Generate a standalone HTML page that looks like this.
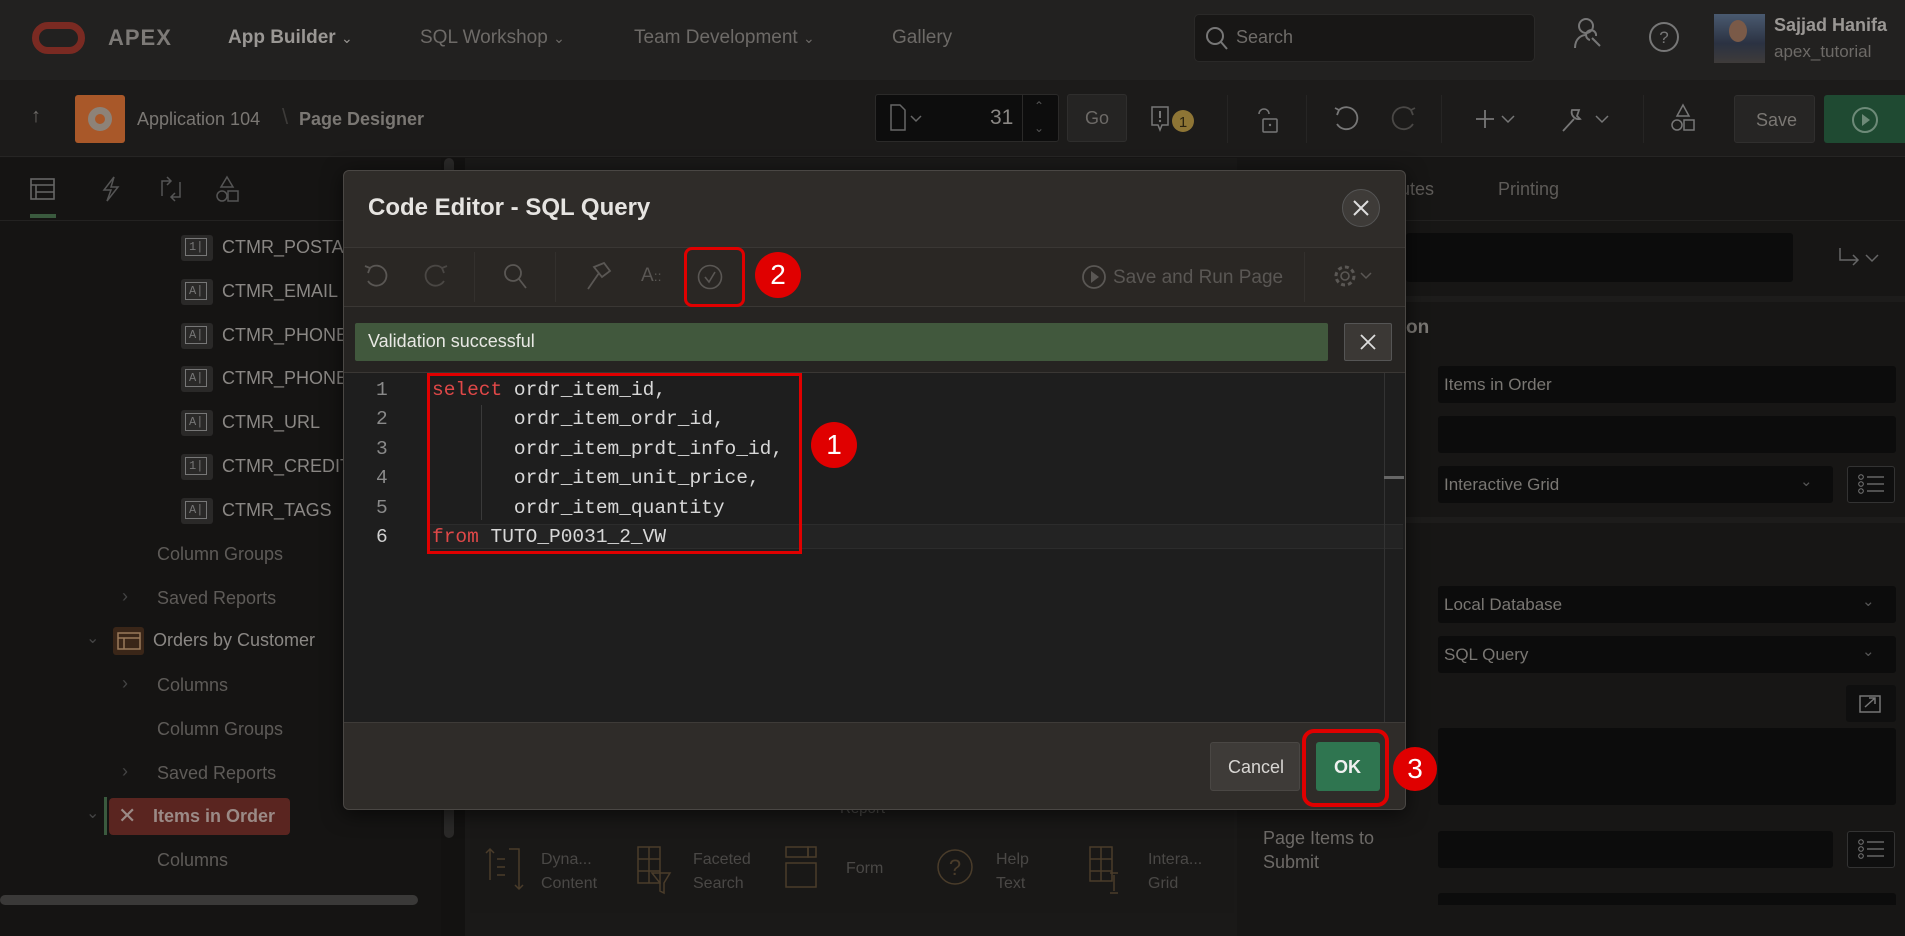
<!DOCTYPE html>
<html><head><meta charset="utf-8"><style>
*{box-sizing:border-box;margin:0;padding:0}
body{width:1905px;height:936px;overflow:hidden;background:#161514;font-family:"Liberation Sans",sans-serif;position:relative;color:#8a8784}
.a{position:absolute}
.t{position:absolute;white-space:nowrap}
svg{position:absolute;overflow:visible}
.inp{position:absolute;background:#0c0c0c;border-radius:3px}
.mono{font-family:"Liberation Mono",monospace}
</style></head><body>
<!-- top header -->
<div class="a" style="left:0;top:0;width:1905px;height:80px;background:#222120"></div>
<div class="a" style="left:32px;top:22px;width:53px;height:32px;border:7px solid #7a2a22;border-radius:16px"></div>
<div class="t" style="left:108px;top:25px;font-size:22px;font-weight:bold;color:#7d7a77;letter-spacing:1px">APEX</div>
<div class="t" style="left:228px;top:27px;font-size:19px;font-weight:bold;color:#9a9794">App Builder <span style="font-weight:normal;font-size:14px">&#8964;</span></div>
<div class="t" style="left:420px;top:27px;font-size:19px;color:#6d6a67">SQL Workshop <span style="font-size:14px">&#8964;</span></div>
<div class="t" style="left:634px;top:27px;font-size:19px;color:#6d6a67">Team Development <span style="font-size:14px">&#8964;</span></div>
<div class="t" style="left:892px;top:27px;font-size:19px;color:#6d6a67">Gallery</div>
<div class="a" style="left:1194px;top:14px;width:341px;height:48px;background:#181716;border:1px solid #2a2928;border-radius:5px"></div>
<svg style="left:1205px;top:26px" width="26" height="26"><circle cx="10" cy="10" r="8" fill="none" stroke="#777" stroke-width="2"/><line x1="16" y1="16" x2="22" y2="23" stroke="#777" stroke-width="2"/></svg>
<div class="t" style="left:1236px;top:27px;font-size:18px;color:#6f6c69">Search</div>
<svg style="left:1572px;top:16px" width="32" height="40"><circle cx="14" cy="10" r="7" fill="none" stroke="#777" stroke-width="2"/><path d="M3 32 C3 22 10 19 14 19" fill="none" stroke="#777" stroke-width="2"/><path d="M20 22 L28 30 M18 24 a5 5 0 1 1 6 -4" fill="none" stroke="#777" stroke-width="2"/></svg>
<svg style="left:1648px;top:21px" width="32" height="32"><circle cx="16" cy="16" r="14" fill="none" stroke="#777" stroke-width="2"/><text x="16" y="22" font-size="17" fill="#777" text-anchor="middle" font-family="Liberation Sans">?</text></svg>
<div class="a" style="left:1714px;top:14px;width:51px;height:49px;background:linear-gradient(#4a5a70,#2b3242 60%,#3e3b3a);"></div>
<div class="a" style="left:1729px;top:20px;width:18px;height:22px;border-radius:50%;background:#7a5a48"></div>
<div class="t" style="left:1774px;top:15px;font-size:18px;font-weight:bold;color:#9a9794">Sajjad Hanifa</div>
<div class="t" style="left:1774px;top:42px;font-size:17px;color:#6d6a67">apex_tutorial</div>
<!-- second bar -->
<div class="a" style="left:0;top:80px;width:1905px;height:77px;background:#1c1b1a;border-bottom:1px solid #262524"></div>
<div class="t" style="left:31px;top:105px;font-size:20px;color:#6d6a67">&#8593;</div>
<div class="a" style="left:75px;top:95px;width:50px;height:48px;background:#a95829;border-radius:3px"></div>
<div class="a" style="left:88px;top:107px;width:24px;height:24px;border-radius:50%;border:7px solid #8d8278"></div>
<div class="t" style="left:137px;top:109px;font-size:18px;color:#7a7773">Application 104</div>
<div class="t" style="left:282px;top:104px;font-size:22px;color:#3d3b39">\</div>
<div class="t" style="left:299px;top:109px;font-size:18px;font-weight:bold;color:#7a7773">Page Designer</div>
<div class="a" style="left:875px;top:94px;width:184px;height:48px;background:#0d0d0d;border:1px solid #2b2a29;border-radius:3px"></div>
<div class="a" style="left:1022px;top:95px;width:1px;height:46px;background:#2b2a29"></div>
<svg style="left:889px;top:104px" width="40" height="28"><path d="M2 1 H11 L16 6 V26 H2 Z" fill="none" stroke="#666" stroke-width="1.5"/><path d="M22 12 l5 5 l5 -5" fill="none" stroke="#666" stroke-width="1.5"/></svg>
<div class="t" style="left:990px;top:106px;font-size:21px;color:#8a8784">31</div>
<div class="t" style="left:1034px;top:99px;font-size:12px;color:#555">&#8963;</div>
<div class="t" style="left:1034px;top:121px;font-size:12px;color:#555">&#8964;</div>
<div class="a" style="left:1067px;top:94px;width:60px;height:48px;background:#252423;border:1px solid #2f2e2d;border-radius:3px"></div>
<div class="t" style="left:1085px;top:108px;font-size:18px;color:#6d6a67">Go</div>
<svg style="left:1150px;top:106px" width="52" height="30"><path d="M2 1 H18 V19 H12 L10 24 L8 19 H2 Z" fill="none" stroke="#777" stroke-width="1.5"/><line x1="10" y1="5" x2="10" y2="12" stroke="#777" stroke-width="2"/><circle cx="10" cy="15" r="1.2" fill="#777"/><circle cx="33" cy="15" r="11" fill="#8e7535"/><text x="33" y="21" font-size="15" fill="#2a2210" text-anchor="middle" font-family="Liberation Sans">1</text></svg>
<div class="a" style="left:1227px;top:95px;width:1px;height:48px;background:#262524"></div>
<svg style="left:1255px;top:106px" width="26" height="30"><path d="M4 8 a5 5 0 0 1 10 0" fill="none" stroke="#777" stroke-width="1.5"/><rect x="8" y="13" width="14" height="13" rx="1" fill="none" stroke="#777" stroke-width="1.5"/><circle cx="15" cy="19" r="1.2" fill="#777"/></svg>
<div class="a" style="left:1306px;top:95px;width:1px;height:48px;background:#262524"></div>
<svg style="left:1333px;top:106px" width="90" height="28"><path d="M6 4 A11 11 0 1 1 4 18" fill="none" stroke="#777" stroke-width="1.8"/><path d="M2 2 L6 4 L4 9" fill="none" stroke="#777" stroke-width="1.8"/><path d="M78 4 A11 11 0 1 0 80 18" fill="none" stroke="#4a4846" stroke-width="1.8"/><path d="M82 2 L78 4 L80 9" fill="none" stroke="#4a4846" stroke-width="1.8"/></svg>
<div class="a" style="left:1441px;top:95px;width:1px;height:48px;background:#262524"></div>
<svg style="left:1476px;top:108px" width="46" height="24"><path d="M9 2 V20 M0 11 H18" stroke="#777" stroke-width="1.8"/><path d="M26 8 l6 6 l6 -6" fill="none" stroke="#777" stroke-width="1.5"/></svg>
<svg style="left:1560px;top:104px" width="52" height="30"><path d="M3 27 L14 15 M12 6 a7 7 0 0 0 8 9 L17 12 L19 6 Z" fill="none" stroke="#777" stroke-width="1.8"/><path d="M36 12 l6 6 l6 -6" fill="none" stroke="#777" stroke-width="1.5"/></svg>
<div class="a" style="left:1643px;top:95px;width:1px;height:48px;background:#262524"></div>
<svg style="left:1670px;top:104px" width="26" height="30"><path d="M13 1 L19 12 H7 Z" fill="none" stroke="#777" stroke-width="1.5"/><circle cx="7" cy="21" r="5" fill="none" stroke="#777" stroke-width="1.5"/><rect x="14" y="16" width="10" height="10" fill="none" stroke="#777" stroke-width="1.5"/></svg>
<div class="a" style="left:1734px;top:95px;width:81px;height:48px;background:#262524;border:1px solid #302f2e;border-radius:3px"></div>
<div class="t" style="left:1756px;top:110px;font-size:18px;color:#7a7773">Save</div>
<div class="a" style="left:1824px;top:95px;width:81px;height:48px;background:#1f4a32;border-radius:3px 0 0 3px"></div>
<svg style="left:1851px;top:106px" width="28" height="28"><circle cx="14" cy="14" r="12" fill="none" stroke="#6d8a78" stroke-width="2"/><path d="M11 8 L19 14 L11 20 Z" fill="#6d8a78"/></svg>
<!-- left panel -->
<div class="a" style="left:0;top:158px;width:441px;height:778px;background:#151413"></div>
<div class="a" style="left:0;top:220px;width:441px;height:1px;background:#232221"></div>
<svg style="left:30px;top:176px" width="220" height="26"><rect x="1" y="3" width="23" height="20" fill="none" stroke="#666" stroke-width="1.6"/><line x1="1" y1="9" x2="24" y2="9" stroke="#666" stroke-width="1.6"/><line x1="6" y1="9" x2="6" y2="23" stroke="#666" stroke-width="1.6"/><line x1="6" y1="16" x2="24" y2="16" stroke="#666" stroke-width="1.6"/><path d="M84 1 L74 14 H81 L77 25 L88 11 H81 Z" fill="none" stroke="#555" stroke-width="1.5"/><path d="M140 5 H132 V20 M142 21 H150 V6 M137 1 L141 5 L137 9 M145 25 L141 21 L145 17" fill="none" stroke="#555" stroke-width="1.5"/><path d="M197 1 L203 11 H191 Z" fill="none" stroke="#555" stroke-width="1.5"/><circle cx="192" cy="20" r="5" fill="none" stroke="#555" stroke-width="1.5"/><rect x="198" y="15" width="10" height="10" fill="none" stroke="#555" stroke-width="1.5"/></svg>
<div class="a" style="left:30px;top:214px;width:26px;height:4px;background:#3a5a3e"></div>
<!-- tree rows -->
<div class="a" style="left:181px;top:235px;width:32px;height:26px;background:#2a2928;border-radius:3px"></div>
<div class="t mono" style="left:185px;top:238px;font-size:12px;color:#777;border:1px solid #777;padding:0 3px;line-height:16px">1|</div>
<div class="t" style="left:222px;top:237px;font-size:18px;color:#8a8784">CTMR_POSTA</div>
<div class="a" style="left:181px;top:279px;width:32px;height:26px;background:#2a2928;border-radius:3px"></div>
<div class="t mono" style="left:185px;top:282px;font-size:12px;color:#777;border:1px solid #777;padding:0 3px;line-height:16px">A|</div>
<div class="t" style="left:222px;top:281px;font-size:18px;color:#8a8784">CTMR_EMAIL</div>
<div class="a" style="left:181px;top:323px;width:32px;height:26px;background:#2a2928;border-radius:3px"></div>
<div class="t mono" style="left:185px;top:326px;font-size:12px;color:#777;border:1px solid #777;padding:0 3px;line-height:16px">A|</div>
<div class="t" style="left:222px;top:325px;font-size:18px;color:#8a8784">CTMR_PHONE</div>
<div class="a" style="left:181px;top:366px;width:32px;height:26px;background:#2a2928;border-radius:3px"></div>
<div class="t mono" style="left:185px;top:369px;font-size:12px;color:#777;border:1px solid #777;padding:0 3px;line-height:16px">A|</div>
<div class="t" style="left:222px;top:368px;font-size:18px;color:#8a8784">CTMR_PHONE</div>
<div class="a" style="left:181px;top:410px;width:32px;height:26px;background:#2a2928;border-radius:3px"></div>
<div class="t mono" style="left:185px;top:413px;font-size:12px;color:#777;border:1px solid #777;padding:0 3px;line-height:16px">A|</div>
<div class="t" style="left:222px;top:412px;font-size:18px;color:#8a8784">CTMR_URL</div>
<div class="a" style="left:181px;top:454px;width:32px;height:26px;background:#2a2928;border-radius:3px"></div>
<div class="t mono" style="left:185px;top:457px;font-size:12px;color:#777;border:1px solid #777;padding:0 3px;line-height:16px">1|</div>
<div class="t" style="left:222px;top:456px;font-size:18px;color:#8a8784">CTMR_CREDIT</div>
<div class="a" style="left:181px;top:498px;width:32px;height:26px;background:#2a2928;border-radius:3px"></div>
<div class="t mono" style="left:185px;top:501px;font-size:12px;color:#777;border:1px solid #777;padding:0 3px;line-height:16px">A|</div>
<div class="t" style="left:222px;top:500px;font-size:18px;color:#8a8784">CTMR_TAGS</div>
<div class="t" style="left:157px;top:544px;font-size:18px;color:#5e5b58">Column Groups</div>
<div class="t" style="left:122px;top:586px;font-size:18px;color:#444">›</div>
<div class="t" style="left:157px;top:588px;font-size:18px;color:#5e5b58">Saved Reports</div>
<div class="t" style="left:86px;top:628px;font-size:16px;color:#444">&#8964;</div>
<div class="a" style="left:113px;top:627px;width:31px;height:28px;background:#3a2618;border-radius:3px"></div>
<svg style="left:117px;top:632px" width="24" height="18"><rect x="1" y="1" width="22" height="16" fill="none" stroke="#9a7a5a" stroke-width="1.5"/><line x1="1" y1="6" x2="23" y2="6" stroke="#9a7a5a" stroke-width="1.5"/><line x1="7" y1="6" x2="7" y2="17" stroke="#9a7a5a" stroke-width="1.5"/></svg>
<div class="t" style="left:153px;top:630px;font-size:18px;color:#8a8784">Orders by Customer</div>
<div class="t" style="left:122px;top:673px;font-size:18px;color:#444">›</div>
<div class="t" style="left:157px;top:675px;font-size:18px;color:#5e5b58">Columns</div>
<div class="t" style="left:157px;top:719px;font-size:18px;color:#5e5b58">Column Groups</div>
<div class="t" style="left:122px;top:761px;font-size:18px;color:#444">›</div>
<div class="t" style="left:157px;top:763px;font-size:18px;color:#5e5b58">Saved Reports</div>
<div class="t" style="left:86px;top:803px;font-size:16px;color:#444">&#8964;</div>
<div class="a" style="left:104px;top:797px;width:3px;height:38px;background:#3a5a3e"></div>
<div class="a" style="left:109px;top:798px;width:181px;height:37px;background:#5a2520;border-radius:4px"></div>
<div class="t" style="left:118px;top:803px;font-size:22px;color:#9b8a86">&#10005;</div>
<div class="t" style="left:153px;top:806px;font-size:18px;font-weight:bold;color:#9b8a86">Items in Order</div>
<div class="t" style="left:157px;top:850px;font-size:18px;color:#5e5b58">Columns</div>
<div class="a" style="left:0;top:895px;width:418px;height:10px;background:#3a3938;border-radius:5px"></div>
<div class="a" style="left:441px;top:158px;width:24px;height:778px;background:#131211"></div>
<div class="a" style="left:444px;top:158px;width:10px;height:680px;background:#2a2928;border-radius:5px"></div>
<!-- middle -->
<div class="a" style="left:465px;top:158px;width:772px;height:778px;background:#1a1918"></div>
<div class="a" style="left:470px;top:810px;width:764px;height:103px;background:#191817"></div>
<div class="t" style="left:840px;top:800px;font-size:15px;color:#4a4846">Report</div>
<svg style="left:485px;top:845px" width="740" height="55"><path d="M5 35 V4 M1 8 L5 4 L9 8 M24 4 H34 V44 M30 40 L34 44 L38 40 M12 14 H20 M12 22 H20 M12 30 H20" fill="none" stroke="#4a3c2a" stroke-width="1.5"/><g transform="translate(153,0)" fill="none" stroke="#4a3c2a" stroke-width="1.5"><rect x="0" y="2" width="22" height="36"/><line x1="0" y1="14" x2="22" y2="14"/><line x1="0" y1="26" x2="22" y2="26"/><line x1="11" y1="2" x2="11" y2="38"/><path d="M14 28 H32 L26 38 V48 L22 46 V38 Z"/></g><g transform="translate(301,0)" fill="none" stroke="#4a3c2a" stroke-width="1.5"><rect x="0" y="2" width="22" height="10"/><rect x="22" y="2" width="8" height="10"/><rect x="0" y="18" width="30" height="24"/></g><g transform="translate(453,0)" fill="none" stroke="#4a3c2a" stroke-width="1.5"><circle cx="17" cy="22" r="17"/></g><text x="470" y="30" font-size="22" fill="#4a3c2a" text-anchor="middle" font-family="Liberation Sans">?</text><g transform="translate(605,0)" fill="none" stroke="#4a3c2a" stroke-width="1.5"><rect x="0" y="2" width="22" height="34"/><line x1="0" y1="14" x2="22" y2="14"/><line x1="0" y1="26" x2="22" y2="26"/><line x1="11" y1="2" x2="11" y2="36"/><path d="M24 30 V46 M20 28 H28 M20 48 H28"/></g></svg>
<div class="t" style="left:541px;top:848px;font-size:16px;color:#4a4846;line-height:24px">Dyna...<br>Content</div>
<div class="t" style="left:693px;top:848px;font-size:16px;color:#4a4846;line-height:24px">Faceted<br>Search</div>
<div class="t" style="left:846px;top:860px;font-size:16px;color:#4a4846">Form</div>
<div class="t" style="left:996px;top:848px;font-size:16px;color:#4a4846;line-height:24px">Help<br>Text</div>
<div class="t" style="left:1148px;top:848px;font-size:16px;color:#4a4846;line-height:24px">Intera...<br>Grid</div>
<!-- right panel -->
<div class="a" style="left:1237px;top:158px;width:668px;height:778px;background:#171615"></div>
<div class="a" style="left:1237px;top:220px;width:668px;height:1px;background:#222120"></div>
<div class="t" style="left:1380px;top:179px;font-size:18px;color:#5e5b58">ributes</div>
<div class="t" style="left:1498px;top:179px;font-size:18px;color:#5e5b58">Printing</div>
<div class="inp" style="left:1406px;top:233px;width:387px;height:49px"></div>
<svg style="left:1838px;top:246px" width="50" height="26"><path d="M2 2 V14 H20 M15 9 L20 14 L15 19" fill="none" stroke="#666" stroke-width="1.5"/><path d="M28 9 l6 6 l6 -6" fill="none" stroke="#666" stroke-width="1.5"/></svg>
<div class="a" style="left:1406px;top:296px;width:499px;height:6px;background:#1d1c1b"></div>
<div class="t" style="left:1406px;top:317px;font-size:19px;font-weight:bold;color:#7a7773">on</div>
<div class="inp" style="left:1438px;top:366px;width:458px;height:37px"></div>
<div class="t" style="left:1444px;top:375px;font-size:17px;color:#7a7773">Items in Order</div>
<div class="inp" style="left:1438px;top:416px;width:458px;height:37px"></div>
<div class="inp" style="left:1438px;top:466px;width:395px;height:37px"></div>
<div class="t" style="left:1444px;top:475px;font-size:17px;color:#7a7773">Interactive Grid</div>
<div class="t" style="left:1800px;top:472px;font-size:15px;color:#555">&#8964;</div>
<div class="a" style="left:1847px;top:466px;width:48px;height:37px;border:1px solid #333;border-radius:3px;background:#0f0f0f"></div>
<svg style="left:1858px;top:474px" width="28" height="20"><circle cx="3" cy="3" r="2.3" fill="none" stroke="#777"/><circle cx="3" cy="10" r="2.3" fill="none" stroke="#777"/><circle cx="3" cy="17" r="2.3" fill="none" stroke="#777"/><path d="M9 3H26M9 10H26M9 17H26" stroke="#777" stroke-width="1.3"/></svg>
<div class="a" style="left:1406px;top:517px;width:499px;height:6px;background:#1d1c1b"></div>
<div class="inp" style="left:1438px;top:586px;width:458px;height:37px"></div>
<div class="t" style="left:1444px;top:595px;font-size:17px;color:#7a7773">Local Database</div>
<div class="t" style="left:1862px;top:592px;font-size:15px;color:#555">&#8964;</div>
<div class="inp" style="left:1438px;top:636px;width:458px;height:37px"></div>
<div class="t" style="left:1444px;top:645px;font-size:17px;color:#7a7773">SQL Query</div>
<div class="t" style="left:1862px;top:642px;font-size:15px;color:#555">&#8964;</div>
<div class="a" style="left:1846px;top:685px;width:50px;height:37px;background:#0f0f0f;border-radius:3px"></div>
<svg style="left:1859px;top:692px" width="24" height="22"><rect x="1" y="4" width="20" height="16" fill="none" stroke="#777" stroke-width="1.5"/><path d="M6 15 L16 6 M10 6 H16 V12" fill="none" stroke="#777" stroke-width="1.5"/></svg>
<div class="inp" style="left:1438px;top:728px;width:458px;height:77px"></div>
<div class="t" style="left:1263px;top:826px;font-size:18px;color:#6d6a67;line-height:24px">Page Items to<br>Submit</div>
<div class="inp" style="left:1438px;top:831px;width:395px;height:37px"></div>
<div class="a" style="left:1847px;top:831px;width:48px;height:37px;border:1px solid #333;border-radius:3px;background:#0f0f0f"></div>
<svg style="left:1858px;top:839px" width="28" height="20"><circle cx="3" cy="3" r="2.3" fill="none" stroke="#777"/><circle cx="3" cy="10" r="2.3" fill="none" stroke="#777"/><circle cx="3" cy="17" r="2.3" fill="none" stroke="#777"/><path d="M9 3H26M9 10H26M9 17H26" stroke="#777" stroke-width="1.3"/></svg>
<div class="inp" style="left:1438px;top:893px;width:458px;height:43px"></div>
<div class="a" style="left:1237px;top:905px;width:668px;height:31px;background:#171615"></div>
<!-- dialog -->
<div class="a" style="left:343px;top:170px;width:1063px;height:640px;background:#2f2c29;border:1px solid #4a4744;border-radius:6px;box-shadow:0 4px 20px rgba(0,0,0,.6)"></div>
<div class="t" style="left:368px;top:194px;font-size:24px;font-weight:bold;color:#e6e4e1">Code Editor - SQL Query</div>
<div class="a" style="left:1342px;top:189px;width:38px;height:38px;border-radius:50%;background:#3e3b38;border:1px solid #555"></div>
<svg style="left:1352px;top:199px" width="18" height="18"><path d="M2 2 L16 16 M16 2 L2 16" stroke="#ddd" stroke-width="2"/></svg>
<div class="a" style="left:344px;top:247px;width:1061px;height:60px;background:#2a2724;border-top:1px solid #3a3734;border-bottom:1px solid #3a3734"></div>
<svg style="left:364px;top:263px" width="100" height="28"><path d="M6 5 A10 10 0 1 1 4 18" fill="none" stroke="#5a5754" stroke-width="1.8"/><path d="M1 3 L6 5 L4 10" fill="none" stroke="#5a5754" stroke-width="1.8"/><path d="M78 5 A10 10 0 1 0 80 18" fill="none" stroke="#4a4744" stroke-width="1.8"/><path d="M83 3 L78 5 L80 10" fill="none" stroke="#4a4744" stroke-width="1.8"/></svg>
<div class="a" style="left:474px;top:252px;width:1px;height:50px;background:#33302d"></div>
<svg style="left:503px;top:263px" width="26" height="28"><circle cx="10" cy="10" r="8" fill="none" stroke="#5a5754" stroke-width="1.8"/><line x1="16" y1="16" x2="23" y2="25" stroke="#5a5754" stroke-width="1.8"/></svg>
<div class="a" style="left:555px;top:252px;width:1px;height:50px;background:#33302d"></div>
<svg style="left:584px;top:261px" width="28" height="30"><path d="M4 28 L15 12 M10 6 L20 2 L26 10 L18 16 Z" fill="none" stroke="#5a5754" stroke-width="1.8"/></svg>
<div class="t" style="left:641px;top:265px;font-size:19px;color:#5a5754">A<span style="font-size:14px">::</span></div>
<svg style="left:697px;top:264px" width="28" height="28"><circle cx="13" cy="13" r="11.5" fill="none" stroke="#5a5754" stroke-width="1.6"/><path d="M8 13 L12 18 L18 8" fill="none" stroke="#5a5754" stroke-width="1.6"/></svg>
<svg style="left:1082px;top:264px" width="28" height="28"><circle cx="12" cy="13" r="11" fill="none" stroke="#5a5754" stroke-width="1.8"/><path d="M9 7 L17 13 L9 19 Z" fill="#5a5754"/></svg>
<div class="t" style="left:1113px;top:267px;font-size:19px;color:#5a5754">Save and Run Page</div>
<div class="a" style="left:1304px;top:252px;width:1px;height:50px;background:#33302d"></div>
<svg style="left:1333px;top:263px" width="46" height="28"><circle cx="12" cy="13" r="4" fill="none" stroke="#5a5754" stroke-width="1.6"/><circle cx="12" cy="13" r="9" fill="none" stroke="#5a5754" stroke-width="3" stroke-dasharray="4 3"/><path d="M28 10 l5 5 l5 -5" fill="none" stroke="#5a5754" stroke-width="1.5"/></svg>
<div class="a" style="left:344px;top:307px;width:1061px;height:65px;background:#262422"></div>
<div class="a" style="left:355px;top:323px;width:973px;height:38px;background:#41583d;border-radius:2px"></div>
<div class="t" style="left:368px;top:331px;font-size:18px;color:#e8e8e4">Validation successful</div>
<div class="a" style="left:1344px;top:323px;width:48px;height:38px;background:#3b3835;border:1px solid #555;border-radius:2px"></div>
<svg style="left:1360px;top:334px" width="16" height="16"><path d="M1 1 L15 15 M15 1 L1 15" stroke="#ddd" stroke-width="1.8"/></svg>
<div class="a" style="left:344px;top:372px;width:1061px;height:350px;background:#1e1e1e;border-top:1px solid #3a3734"></div>
<div class="a" style="left:428px;top:524px;width:975px;height:25px;background:#232323;border-top:1px solid #2c2c2c;border-bottom:1px solid #2c2c2c"></div>
<div class="a" style="left:1384px;top:373px;width:1px;height:349px;background:#333"></div>
<div class="a" style="left:1384px;top:476px;width:20px;height:3px;background:#666"></div>
<div class="a" style="left:481px;top:405px;width:1px;height:115px;background:#3a3a3a"></div>
<div class="mono a" style="left:376px;top:376px;font-size:19.5px;line-height:29.4px;color:#8a8a8a;white-space:pre">1
2
3
4
5
<span style="color:#d0d0d0">6</span></div>
<div class="mono a" style="left:432px;top:376px;font-size:19.5px;line-height:29.4px;color:#d8d8d8;white-space:pre"><span style="color:#e04848">select</span> ordr_item_id,
       ordr_item_ordr_id,
       ordr_item_prdt_info_id,
       ordr_item_unit_price,
       ordr_item_quantity
<span style="color:#e04848">from</span> TUTO_P0031_2_VW</div>
<div class="a" style="left:344px;top:722px;width:1061px;height:87px;background:#2f2c29;border-top:1px solid #3e3b38;border-radius:0 0 6px 6px"></div>
<div class="a" style="left:1210px;top:742px;width:90px;height:49px;background:#3e3b38;border:1px solid #4a4744;border-radius:3px"></div>
<div class="t" style="left:1228px;top:757px;font-size:18px;color:#d8d6d3">Cancel</div>
<div class="a" style="left:1316px;top:742px;width:64px;height:49px;background:#2f7550;border-radius:3px"></div>
<div class="t" style="left:1334px;top:757px;font-size:18px;font-weight:bold;color:#f0f0f0">OK</div>
<!-- annotations -->
<div class="a" style="left:427px;top:373px;width:375px;height:181px;border:3px solid #e00000"></div>
<div class="a" style="left:684px;top:247px;width:61px;height:60px;border:3px solid #e00000;border-radius:8px"></div>
<div class="a" style="left:1302px;top:729px;width:87px;height:78px;border:4px solid #e00000;border-radius:12px"></div>
<div class="a" style="left:811px;top:422px;width:46px;height:46px;border-radius:50%;background:#e00000;color:#fff;font-size:28px;text-align:center;line-height:46px">1</div>
<div class="a" style="left:755px;top:252px;width:46px;height:46px;border-radius:50%;background:#e00000;color:#fff;font-size:28px;text-align:center;line-height:46px">2</div>
<div class="a" style="left:1393px;top:747px;width:44px;height:44px;border-radius:50%;background:#e00000;color:#fff;font-size:28px;text-align:center;line-height:44px">3</div>
</body></html>
